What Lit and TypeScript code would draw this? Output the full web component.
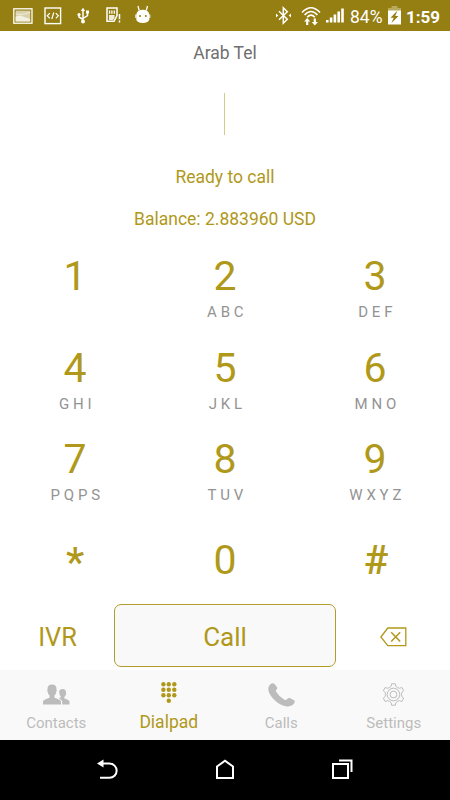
import { LitElement, html, svg, css, nothing } from "lit";
import { customElement, property } from "lit/decorators.js";

const statusIcons = {
  picture: svg`<svg width="20" height="16" viewBox="0 0 20 16"><rect x=".8" y=".8" width="18.2" height="14.4" fill="none" stroke="#fff" stroke-width="1.3"/><rect x="2.6" y="2.6" width="14.6" height="10.8" fill="#d9d2ad"/><path d="M2.6 8.5 7 7.5l10.200 3.500v2.400H2.600z" fill="#f3f0e0"/><path d="M2.600 6 9 6.500l8.200-2" stroke="#efebd6" fill="none"/></svg>`,
  code: svg`<svg width="18" height="18" viewBox="0 0 18 18"><rect x="1" y="1" width="15.600" height="15.600" fill="none" stroke="#fff" stroke-width="1.400"/><path d="M5.800 6.200 3.300 8.800l2.500 2.600M11.800 6.200l2.500 2.600-2.500 2.600M9.800 5.500 7.800 12" fill="none" stroke="#fff" stroke-width="1.200"/></svg>`,
  usb: svg`<svg width="13" height="17" viewBox="0 0 13 17"><path d="M6 3v11M6 12.500 2 10V7M6 11.500l4.500-3V5" fill="none" stroke="#fff" stroke-width="1.500"/><path d="M6 .7 8.200 4H3.800z" fill="#fff"/><circle cx="2" cy="7.600" r="1.600" fill="#fff"/><circle cx="6" cy="14.400" r="2" fill="#fff"/><rect x="9" y="3.500" width="3" height="3" fill="#fff"/></svg>`,
  card: svg`<svg width="15" height="17" viewBox="0 0 15 17"><path d="M1 1h10v7.500L8 14.300H1z" fill="none" stroke="#fff" stroke-width="1.500"/><path d="M3.600 3.500v3.200M5.900 3.500v3.200M8.300 3.500v3.200" stroke="#fff" stroke-width="1.300"/><path d="M3 8h5.500v3L7 13H3z" fill="#fff" opacity=".85"/><path d="M13.500 7v5.200M13.500 13.500v2" stroke="#fff" stroke-width="1.500"/></svg>`,
  android: svg`<svg width="16" height="19" viewBox="0 0 16 19"><path d="M3 1 4.200 5.500M12.500 1 11.300 5.500" stroke="#fff" stroke-width="1.300"/><path d="M1.300 9.500Q2 4.800 7.800 4.800T14.300 9.500V14.500Q13.500 17.900 7.800 17.900T1.300 14.500z" fill="#fff"/><path d="M.8 9.500v3.500M14.800 9.500v3.500" stroke="#fff" stroke-width="1"/><circle cx="5" cy="11" r="1" fill="#957e12"/><circle cx="10.800" cy="11" r="1" fill="#957e12"/></svg>`,
  bluetooth: svg`<svg width="17" height="19" viewBox="0 0 17 19"><path d="M4 5.200l8.300 8L8.300 17.200V1.800l4 4-8.300 8" fill="none" stroke="#fff" stroke-width="1.500"/><path d="M1 7.500v4L3.300 9.500zM16 7.500v4l-2.300-2z" fill="#fff"/></svg>`,
  wifi: svg`<svg width="20" height="20" viewBox="0 0 20 20"><path d="M1 6.500Q10-3 19 6.500M3.600 9Q10 2 16.400 9M6.200 11.200Q10 7 13.800 11.200" fill="none" stroke="#fff" stroke-width="1.600"/><path d="M6.200 12 9.300 15.500H7.300V19H5.100v-3.500H3.100zM13.800 19.500 10.700 16h2v-3.500h2.200V16h2z" fill="#fff"/></svg>`,
  signal: svg`<svg width="18" height="15" viewBox="0 0 18 15"><path d="M0 12h2.600v2.500H0zM3.800 9.500h2.600v5H3.800zM7.600 6.500h2.600v8H7.600zM11.400 3.500H14v11h-2.600zM15.200.5h2.600v14h-2.600z" fill="#fff"/></svg>`,
  battery: svg`<svg width="13" height="19" viewBox="0 0 13 19"><path d="M3.500 0h6v2H13v4H0V2h3.500z" fill="#b8a95c"/><path d="M0 4.500h13V18.500H0z" fill="#fff"/><path d="M9.500 4.500 2.500 11.800h3.200L3.500 17 10.500 10H7.200z" fill="#957e12"/></svg>`,
};

const dots = [
  [2.4, 2.3], [7.8, 2.3], [13.3, 2.3],
  [2.4, 7.8], [7.8, 7.8], [13.3, 7.8],
  [2.4, 13.3], [7.8, 13.3], [13.3, 13.3],
  [7.8, 18.8],
];

const gearPath = () => {
  const pts: string[] = [];
  for (let i = 0; i < 6; i++) {
    const base = -90 + i * 60;
    for (const [off, r] of [[-10, 10.9], [10, 10.9], [16, 8.6], [30, 8], [44, 8.6]]) {
      const a = ((base + off) * Math.PI) / 180;
      pts.push(`${(11.5 + r * Math.cos(a)).toFixed(2)} ${(11.5 + r * Math.sin(a)).toFixed(2)}`);
    }
  }
  return `M${pts.join("L")}Z`;
};

const tabIcons = {
  contacts: svg`<svg width="27" height="21" viewBox="0 0 27 21" fill="currentColor"><path d="M0 20.500v-3Q.3 15.800 6.500 13.800V11.600Q4.800 9.800 4.600 7.600 3.900 6.700 4.500 5.500 4.200.4 9 .4T13.500 5.500Q14.100 6.700 13.400 7.600 13.200 9.800 11.500 11.600v2.200q6.200 2 6.500 3.700v3z"/><path d="M19.200 20.500v-3q-.2-1.500-3.200-3.100 1.800-.8 1.900-1.600-1.700-1.600-1.700-5.300Q16.300 5 19.600 5t3.500 3.700q.1 2.800-1.700 4.300v1.500q4.800 1.500 5.100 3v3z"/></svg>`,
  dialpad: svg`<svg width="16" height="22" viewBox="0 0 16 22" fill="currentColor">${dots.map(([x, y]) => svg`<circle cx=${x} cy=${y} r="2.200"/>`)}</svg>`,
  calls: svg`<svg width="27" height="24" viewBox="0 0 27 24" fill="currentColor"><path d="M.3 6Q.3 2 3.600.5 5.300-.2 6.600 1L9 4.300Q9.600 5.600 8.600 6.600 7.500 7.400 8.100 8.800 11 13.800 16.500 16.700q1.700.7 2.700-.7 1.200-1.400 2.600-.9l4.300 2.200q1 .9.300 2.400-2 3.900-7.400 3.800Q12.500 22.800 6.400 17 .4 11 .3 6z"/></svg>`,
  settings: svg`<svg width="23" height="23" viewBox="0 0 23 23" fill="none" stroke="currentColor" stroke-width="1" stroke-linejoin="round"><path d=${gearPath()}/><circle cx="11.500" cy="11.500" r="6.300"/><circle cx="11.500" cy="11.500" r="3.400"/></svg>`,
};

@customElement("status-bar")
class StatusBar extends LitElement {
  static styles = css`
    :host { display: flex; height: 31px; background: #957e12; color: #fff; align-items: center; font-size: 17.500px; box-sizing: border-box; padding: 0 9px 0 13px; }
    svg { display: block; flex: none; }
    .left, .right { display: flex; align-items: center; }
    .right { margin-left: auto; }
    .code { margin-left: 11px; }
    .usb { margin-left: 15px; }
    .card { margin-left: 16px; }
    .android { margin: -3px 0 0 14px; }
    .wifi { margin-left: 9px; }
    .signal { margin-left: 5px; }
    .percent { margin-left: 6px; width: 33px; line-height: 20px; padding-top: 2px; }
    .battery { margin-left: 5px; }
    .time { margin-left: 5px; width: 35px; font-weight: 700; font-size: 17px; line-height: 20px; padding-top: 2px; }
  `;
  render() {
    return html`
      <div class="left">
        <span>${statusIcons.picture}</span>
        <span class="code">${statusIcons.code}</span>
        <span class="usb">${statusIcons.usb}</span>
        <span class="card">${statusIcons.card}</span>
        <span class="android">${statusIcons.android}</span>
      </div>
      <div class="right">
        <span>${statusIcons.bluetooth}</span>
        <span class="wifi">${statusIcons.wifi}</span>
        <span class="signal">${statusIcons.signal}</span>
        <span class="percent">84%</span>
        <span class="battery">${statusIcons.battery}</span>
        <span class="time">1:59</span>
      </div>`;
  }
}

@customElement("dial-key")
class DialKey extends LitElement {
  @property() digit = "";
  @property() letters = "";
  static styles = css`
    :host { display: flex; flex-direction: column; align-items: center; padding-top: 11.200px; }
    .digit { font-size: 41px; line-height: 48px; color: #b0991a; }
    .letters { font-size: 15px; line-height: 20px; letter-spacing: 3.800px; margin-top: 2px; padding-left: 4.500px; color: #939393; }
  `;
  render() {
    return html`<span class="digit">${this.digit}</span>
      ${this.letters ? html`<span class="letters">${this.letters}</span>` : nothing}`;
  }
}

const keys = [
  ["1", ""], ["2", "ABC"], ["3", "DEF"],
  ["4", "GHI"], ["5", "JKL"], ["6", "MNO"],
  ["7", "PQPS"], ["8", "TUV"], ["9", "WXYZ"],
  ["*", ""], ["0", ""], ["#", ""],
];

const keyClass = (digit: string, index: number) =>
  digit === "*" ? "low star" : digit === "#" ? "low hash" : index > 8 ? "low" : "";

const tabs: { label: string; icon: keyof typeof tabIcons }[] = [
  { label: "Contacts", icon: "contacts" },
  { label: "Dialpad", icon: "dialpad" },
  { label: "Calls", icon: "calls" },
  { label: "Settings", icon: "settings" },
];

@customElement("app-root")
class AppRoot extends LitElement {
  static styles = css`
    :host { display: flex; flex-direction: column; width: 450px; height: 800px; overflow: hidden; background: #fff; font-family: Roboto, "Noto Sans", sans-serif; }
    svg { display: block; }
    .head { height: 210px; display: flex; flex-direction: column; align-items: center; color: #b0981a; font-size: 17.500px; line-height: 24px; }
    .title { margin-top: 10px; color: #6f6f6f; }
    .caret { width: 1px; height: 42px; background: #d6ca88; margin: 28px 1.500px 0 0; }
    .ready { margin-top: 30px; }
    .balance { margin-top: 18px; }
    .pad { display: grid; grid-template-columns: repeat(3, 150px); grid-template-rows: 91.400px 91.400px 91.400px 88.800px; }
    .low { padding-top: 21.200px; }
    .star { padding-top: 22.800px; font-weight: 500; }
    .hash { padding-left: 2px; font-weight: 500; }
    .actions { height: 66px; display: grid; grid-template-columns: 114px 222px 114px; align-items: start; font-size: 26px; color: #b0981a; }
    .ivr, .erase { height: 64px; display: flex; align-items: center; justify-content: center; }
    .erase { box-sizing: border-box; padding-top: 2px; }
    .call { box-sizing: border-box; height: 63px; border: 1px solid #b29d2a; border-radius: 7px; background: #f9f9f9; display: flex; align-items: center; justify-content: center; padding-top: 3px; }
    .ivr { font-size: 25.400px; padding: 1px 0 0 1px; }
    .tabs { height: 70px; display: grid; grid-template-columns: repeat(4, 1fr); background: #f9f9f9; color: #bcbcbc; }
    .tab { display: flex; flex-direction: column; align-items: center; font-size: 15px; }
    .icon { height: 24px; margin-top: 13px; display: flex; align-items: center; }
    .label { line-height: 20px; margin-top: 6px; }
    .active { color: #b0981a; font-size: 17.500px; }
    .active .icon { margin-top: 11px; }
    .active .label { margin-top: 7px; }
    .nav { height: 60px; background: #000; display: grid; grid-template-columns: 118px 1fr 118.500px; align-items: center; }
    .nav svg { justify-self: center; }
    .nav .back { justify-self: end; }
    .nav .recent { justify-self: start; }
  `;
  render() {
    return html`
      <status-bar></status-bar>
      <div class="head">
        <div class="title">Arab Tel</div>
        <div class="caret"></div>
        <div class="ready">Ready to call</div>
        <div class="balance">Balance: 2.883960 USD</div>
      </div>
      <div class="pad">
        ${keys.map(([d, l], i) => html`<dial-key class=${keyClass(d, i)} .digit=${d} .letters=${l}></dial-key>`)}
      </div>
      <div class="actions">
        <div class="ivr">IVR</div>
        <div class="call">Call</div>
        <div class="erase">
          <svg width="27" height="20" viewBox="0 0 27 20" fill="none" stroke="#b0981a"><path d="M.9 10 7.800 1H25.800V18.600H7.800z" stroke-width="1.300"/><path d="M11.200 5.200 20.200 14.400M20.200 5.200 11.200 14.400" stroke-width="1.500"/></svg>
        </div>
      </div>
      <div class="tabs">
        ${tabs.map((t, i) => html`<div class="tab ${i === 1 ? "active" : ""}"><div class="icon">${tabIcons[t.icon]}</div><div class="label">${t.label}</div></div>`)}
      </div>
      <div class="nav">
        <svg class="back" width="21" height="21" viewBox="0 0 21 21"><path d="M5 4.500h7.500a7 7 0 0 1 0 14.300H3" fill="none" stroke="#fff" stroke-width="2"/><path d="M0 4.500 6.500.5v8z" fill="#fff"/></svg>
        <svg width="18" height="21" viewBox="0 0 18 21"><path d="M1 7.500 9 1.800 17 7.500V19H1z" fill="none" stroke="#fff" stroke-width="2"/></svg>
        <svg class="recent" width="21" height="21" viewBox="0 0 21 21"><path d="M1 5h15v14H1z" fill="none" stroke="#fff" stroke-width="2"/><path d="M7 1.500H19.500V13" fill="none" stroke="#fff" stroke-width="2"/></svg>
      </div>`;
  }
}
